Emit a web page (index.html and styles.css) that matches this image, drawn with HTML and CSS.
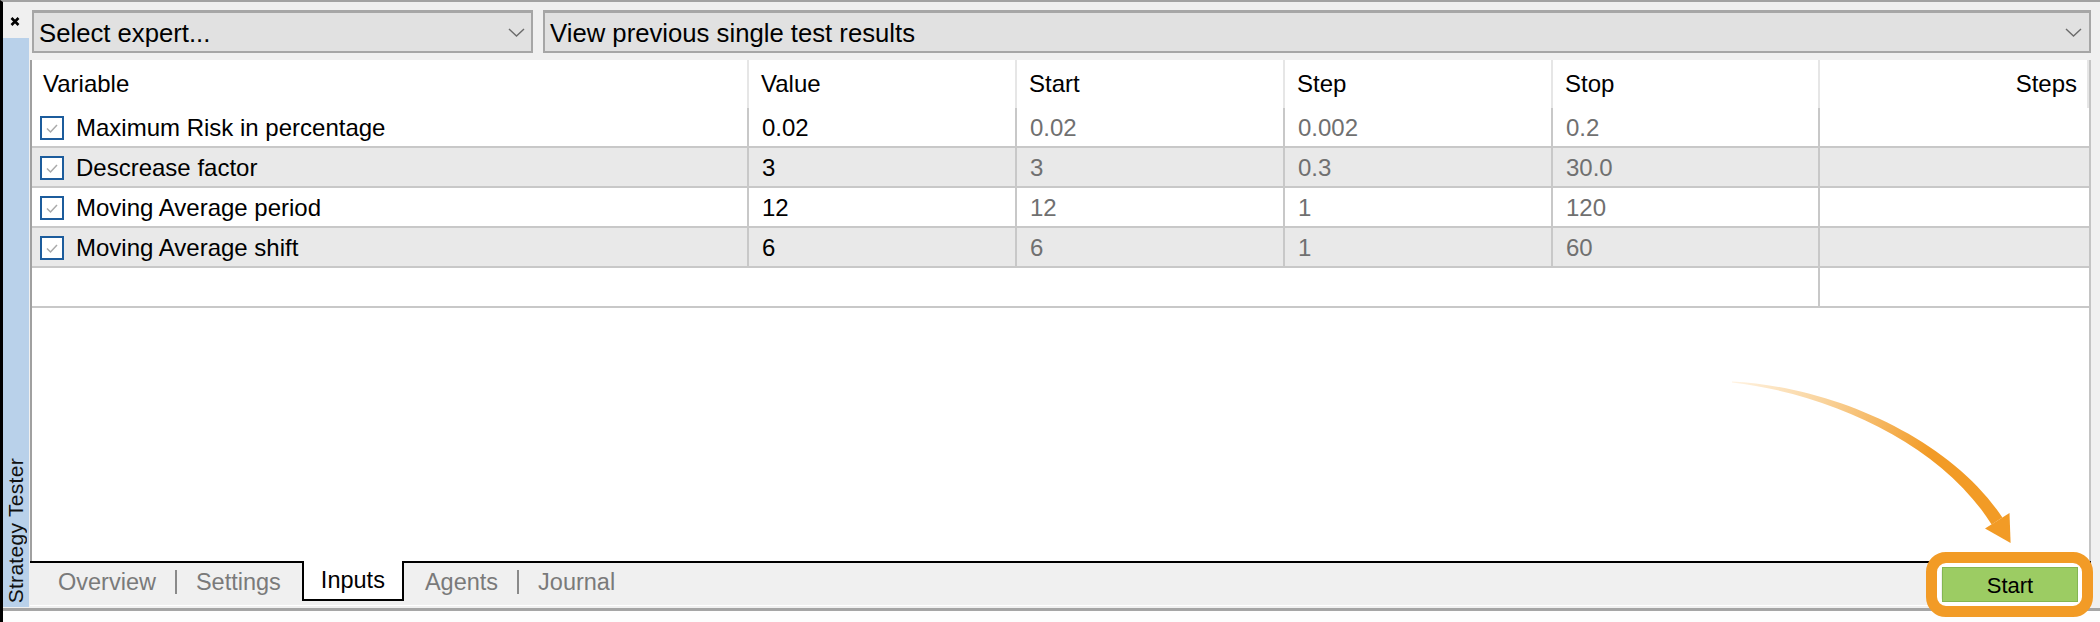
FILE: index.html
```html
<!DOCTYPE html>
<html>
<head>
<meta charset="utf-8">
<title>Strategy Tester</title>
<link rel="stylesheet" href="styles.css">
</head>
<body>
<div class="window">
  <div class="body-row">
    <aside class="side">
      <div class="close">
        <svg width="10" height="9" viewBox="0 0 10 9"><path d="M1.5 1 L8.5 8 M8.5 1 L1.5 8" stroke="#000" stroke-width="2.6" fill="none"/></svg>
      </div>
      <div class="sidebar"><span class="side-title">Strategy Tester</span></div>
    </aside>
    <main class="main">
      <div class="combos">
        <div class="combo combo-expert">
          <span>Select expert...</span>
          <svg class="chev" width="17" height="9" viewBox="0 0 17 9"><path d="M1 1 L8.5 8 L16 1" stroke="#6b6b6b" stroke-width="1.4" fill="none"/></svg>
        </div>
        <div class="combo combo-results">
          <span>View previous single test results</span>
          <svg class="chev" width="17" height="9" viewBox="0 0 17 9"><path d="M1 1 L8.5 8 L16 1" stroke="#6b6b6b" stroke-width="1.4" fill="none"/></svg>
        </div>
      </div>
      <div class="grid-area">
        <div class="grid">
          <div class="cell head c1">Variable</div>
          <div class="cell head">Value</div>
          <div class="cell head">Start</div>
          <div class="cell head">Step</div>
          <div class="cell head">Stop</div>
          <div class="cell head last right">Steps</div>

          <div class="cell c1"><span class="cb"><svg width="20" height="20" viewBox="0 0 20 20"><path d="M5 10.5 L8.5 14 L15 7" stroke="#aaaaaa" stroke-width="1.5" fill="none"/></svg></span>Maximum Risk in percentage</div>
          <div class="cell val">0.02</div>
          <div class="cell dim">0.02</div>
          <div class="cell dim">0.002</div>
          <div class="cell dim">0.2</div>
          <div class="cell last"></div>

          <div class="cell c1 alt"><span class="cb"><svg width="20" height="20" viewBox="0 0 20 20"><path d="M5 10.5 L8.5 14 L15 7" stroke="#aaaaaa" stroke-width="1.5" fill="none"/></svg></span>Descrease factor</div>
          <div class="cell val alt">3</div>
          <div class="cell dim alt">3</div>
          <div class="cell dim alt">0.3</div>
          <div class="cell dim alt">30.0</div>
          <div class="cell last alt"></div>

          <div class="cell c1"><span class="cb"><svg width="20" height="20" viewBox="0 0 20 20"><path d="M5 10.5 L8.5 14 L15 7" stroke="#aaaaaa" stroke-width="1.5" fill="none"/></svg></span>Moving Average period</div>
          <div class="cell val">12</div>
          <div class="cell dim">12</div>
          <div class="cell dim">1</div>
          <div class="cell dim">120</div>
          <div class="cell last"></div>

          <div class="cell c1 alt"><span class="cb"><svg width="20" height="20" viewBox="0 0 20 20"><path d="M5 10.5 L8.5 14 L15 7" stroke="#aaaaaa" stroke-width="1.5" fill="none"/></svg></span>Moving Average shift</div>
          <div class="cell val alt">6</div>
          <div class="cell dim alt">6</div>
          <div class="cell dim alt">1</div>
          <div class="cell dim alt">60</div>
          <div class="cell last alt"></div>

          <div class="cell empty"></div>
          <div class="cell empty"></div>
          <div class="cell empty"></div>
          <div class="cell empty"></div>
          <div class="cell empty keep"></div>
          <div class="cell empty last"></div>
        </div>
      </div>
      <div class="tabbar">
        <nav class="tabs">
          <span class="tab">Overview</span>
          <span class="sep"></span>
          <span class="tab">Settings</span>
          <span class="tab active">Inputs</span>
          <span class="tab">Agents</span>
          <span class="sep"></span>
          <span class="tab">Journal</span>
        </nav>
        <div class="start-wrap">
          <span class="ring"></span>
          <button class="start">Start</button>
        </div>
      </div>
    </main>
  </div>
  <div class="bottom"></div>
</div>
<svg class="arrow" width="2100" height="622" viewBox="0 0 2100 622">
  <defs>
    <linearGradient id="ag" gradientUnits="userSpaceOnUse" x1="1732" y1="382" x2="1975" y2="480">
      <stop offset="0" stop-color="#fff3e2"/>
      <stop offset="0.35" stop-color="#f9d39c"/>
      <stop offset="0.8" stop-color="#f29b26"/>
      <stop offset="1" stop-color="#f29b26"/>
    </linearGradient>
  </defs>
  <path d="M1732 381.5 C1831 386.5 1949 437 2002.4 517.5 L1991.6 524.5 C1941 443 1829 393.5 1732 382.5 Z" fill="url(#ag)"/>
  <path d="M2009.5 513 L1985 528.6 L2010.6 543 Z" fill="#f29b26"/>
</svg>
</body>
</html>
```
FILE: styles.css
```css
html, body {
  margin: 0;
  padding: 0;
}
body {
  width: 2100px;
  height: 622px;
  background: #f0f0f0;
  position: relative;
  overflow: hidden;
  font-family: "Liberation Sans", Arial, sans-serif;
  color: #000;
}
.window {
  height: 622px;
  box-sizing: border-box;
  border-top: 2px solid #a3a3a3;
  border-left: 3px solid #000;
  display: flex;
  flex-direction: column;
}
.body-row {
  display: flex;
  height: 605px;
}
.side {
  width: 27px;
  display: flex;
  flex-direction: column;
}
.close {
  height: 36px;
  box-sizing: border-box;
  padding: 15px 0 0 7px;
  line-height: 0;
}
.sidebar {
  height: 569px;
  width: 26px;
  background: #b9d1ea;
  box-sizing: border-box;
  padding-bottom: 4px;
  display: flex;
  align-items: flex-end;
  justify-content: center;
}
.side-title {
  writing-mode: vertical-rl;
  transform: rotate(180deg);
  font-size: 21px;
  line-height: 26px;
  color: #111;
  letter-spacing: 0.3px;
  white-space: nowrap;
}
.main {
  width: 2061px;
  display: flex;
  flex-direction: column;
}
.combos {
  display: flex;
  gap: 10px;
  margin: 8px 0 7px 2px;
  height: 43px;
}
.combo {
  height: 43px;
  box-sizing: border-box;
  background: #e1e1e1;
  border: 2px solid #a6a6a6;
  border-top-width: 3px;
  display: flex;
  align-items: center;
  justify-content: space-between;
  padding: 3px 7px 0 5px;
  font-size: 25.7px;
  white-space: nowrap;
}
.combo-expert {
  width: 501px;
  padding-right: 6px;
}
.combo-results {
  flex: 1;
}
.chev {
  flex: none;
  margin-bottom: 3px;
}
.grid-area {
  height: 501px;
  box-sizing: border-box;
  background: #fff;
  border-left: 2px solid #a0a0a0;
  border-right: 2px solid #c4c4c4;
}
.grid {
  display: grid;
  grid-template-columns: 717px 268px 268px 268px 267px 1fr;
  font-size: 24px;
}
.cell {
  height: 40px;
  box-sizing: border-box;
  border-right: 2px solid #c8c8c8;
  border-bottom: 2px solid #c8c8c8;
  display: flex;
  align-items: center;
  padding-left: 12px;
  white-space: nowrap;
}
.cell.head {
  height: 48px;
  border-bottom: 0;
  border-right-color: #e6e6e6;
  padding-left: 12px;
}
.cell.head.right {
  justify-content: flex-end;
  padding-right: 10px;
}
.cell.last {
  border-right: 0;
}
.cell.head.last {
  border-right: 2px solid #e6e6e6;
}
.cell.c1 {
  padding-left: 8px;
  padding-top: 1px;
}
.cell.head.c1 {
  padding-left: 11px;
  padding-top: 0;
}
.cell.alt {
  background: #e9e9e9;
}
.cell.val {
  padding-left: 13px;
  padding-top: 1px;
  color: #000;
}
.cell.dim {
  padding-left: 13px;
  padding-top: 1px;
  color: #707070;
}
.cell.empty {
  border-right: 0;
}
.cell.empty.keep {
  border-right: 2px solid #c8c8c8;
}
.cb {
  width: 24px;
  height: 24px;
  box-sizing: border-box;
  border: 2px solid #1c5c9c;
  background: #fff;
  margin-right: 12px;
  display: flex;
  align-items: center;
  justify-content: center;
  flex: none;
}
.tabbar {
  height: 45px;
  box-sizing: border-box;
  border-top: 2px solid #000;
  border-bottom: 1px solid #fff;
  display: flex;
  justify-content: space-between;
  align-items: flex-start;
}
.tabs {
  display: flex;
  align-items: center;
  height: 38px;
  padding-left: 9px;
  font-size: 23.5px;
}
.tab {
  padding: 0 19px;
  color: #7a7a7a;
  line-height: 38px;
}
.tab.active {
  align-self: flex-start;
  margin: -2px 2px 0;
  height: 40px;
  box-sizing: border-box;
  padding: 0 17px;
  background: #fff;
  border: 2px solid #000;
  border-top: 0;
  color: #000;
  line-height: 38px;
}
.sep {
  width: 2px;
  height: 24px;
  background: #8a8a8a;
}
.start-wrap {
  position: relative;
  margin: 4px 13px 0 0;
}
.start {
  position: relative;
  z-index: 2;
  display: block;
  width: 136px;
  height: 35px;
  box-sizing: border-box;
  background: #9ccc63;
  border: 1px solid #84b652;
  font-family: "Liberation Sans", Arial, sans-serif;
  font-size: 22px;
  color: #000;
  padding: 2px 0 0;
}
.ring {
  position: absolute;
  z-index: 1;
  left: -16px;
  right: -15px;
  top: -15px;
  bottom: -15px;
  border: 11px solid #f29b26;
  border-radius: 20px;
  box-shadow: inset 0 0 0 4px #fff;
}
.bottom {
  flex: 1;
  margin-top: 1px;
  border-top: 3px solid #a5a5a5;
  background: #fdfdfd;
}
.arrow {
  position: absolute;
  left: 0;
  top: 0;
  pointer-events: none;
  z-index: 5;
}
```
